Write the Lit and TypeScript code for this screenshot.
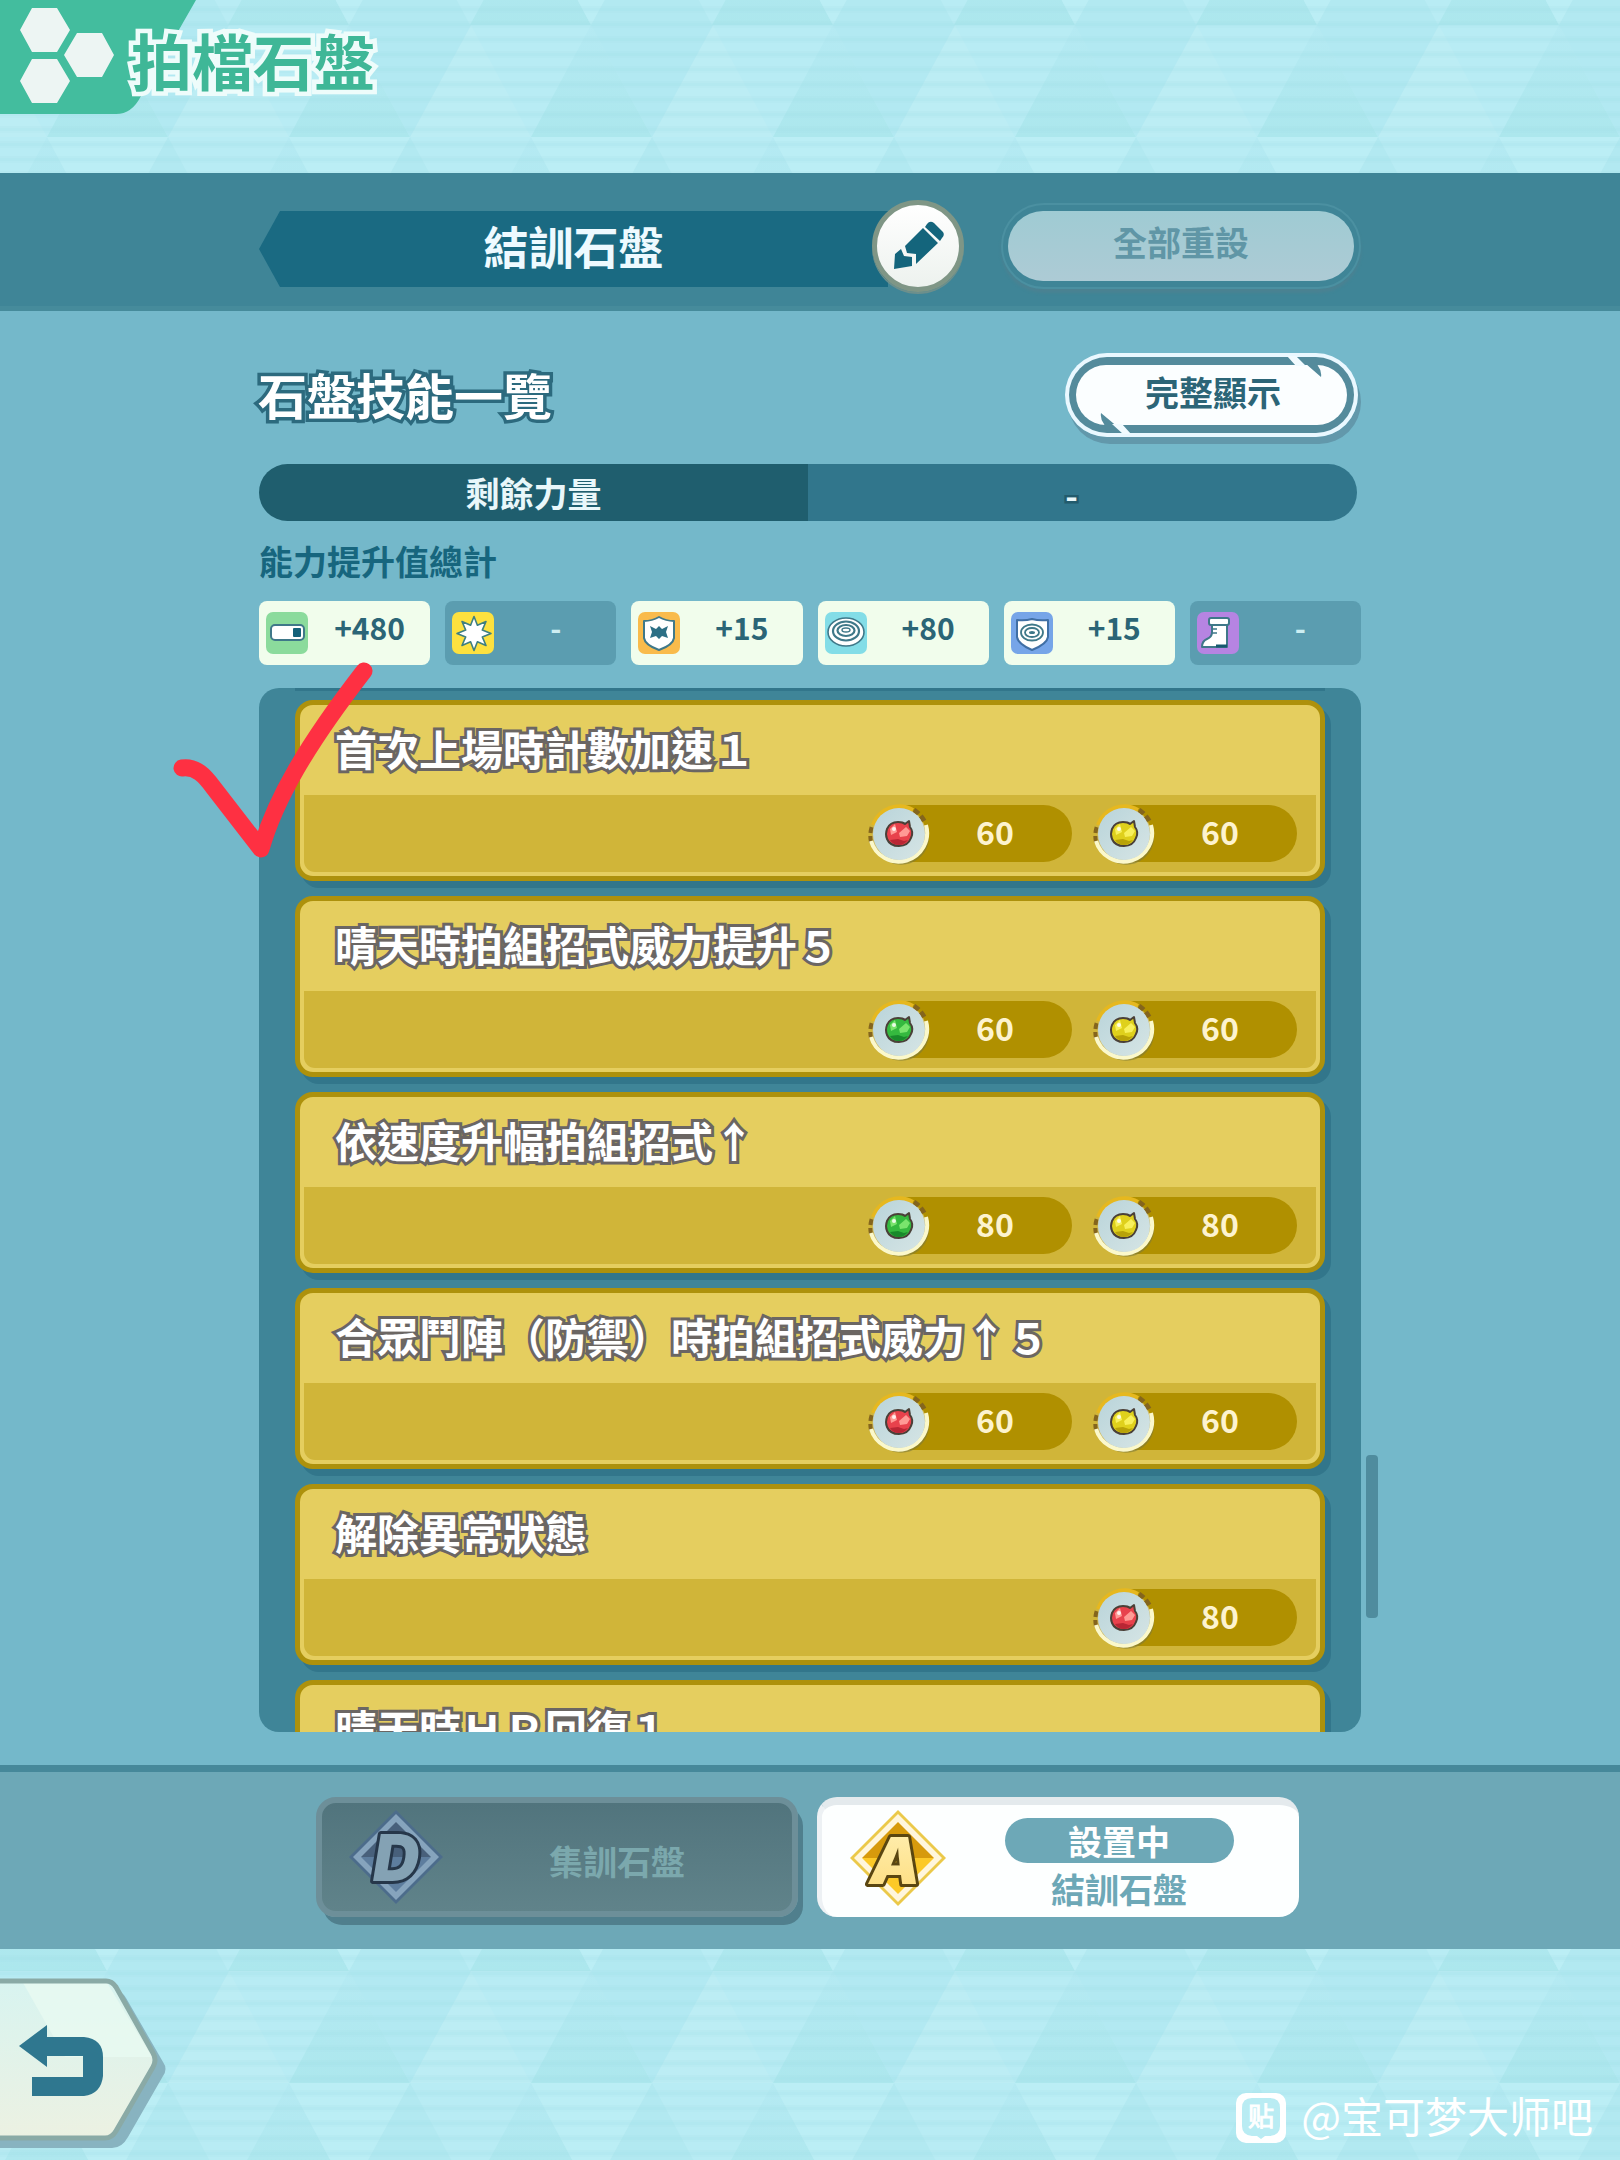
import { LitElement, html, svg, css } from "lit";
import { customElement, property } from "lit/decorators.js";

type Gem = "red" | "green" | "yellow";
type Stat = { icon: string; label: string; value: string };
type Skill = { name: string; costs: { gem: Gem; amount: number }[] };

const STATS: Stat[] = [
  { icon: "hp", label: "HP", value: "+480" },
  { icon: "attack", label: "攻擊", value: "-" },
  { icon: "defense", label: "防禦", value: "+15" },
  { icon: "spAttack", label: "特攻", value: "+80" },
  { icon: "spDefense", label: "特防", value: "+15" },
  { icon: "speed", label: "速度", value: "-" },
];

const SKILLS: Skill[] = [
  { name: "首次上場時計數加速１", costs: [{ gem: "red", amount: 60 }, { gem: "yellow", amount: 60 }] },
  { name: "晴天時拍組招式威力提升５", costs: [{ gem: "green", amount: 60 }, { gem: "yellow", amount: 60 }] },
  { name: "依速度升幅拍組招式↑", costs: [{ gem: "green", amount: 80 }, { gem: "yellow", amount: 80 }] },
  { name: "合眾鬥陣（防禦）時拍組招式威力↑５", costs: [{ gem: "red", amount: 60 }, { gem: "yellow", amount: 60 }] },
  { name: "解除異常狀態", costs: [{ gem: "red", amount: 80 }] },
  { name: "晴天時ＨＰ回復１", costs: [] },
];

const starPoints = (cx: number, cy: number, outer: number, inner: number, tips: number) =>
  Array.from({ length: tips * 2 }, (_, i) => {
    const r = i % 2 ? inner : outer;
    const a = (Math.PI * i) / tips - Math.PI / 2;
    return `${(cx + r * Math.cos(a)).toFixed(1)},${(cy + r * Math.sin(a)).toFixed(1)}`;
  }).join(" ");

const LINE = "#3f7889";

const STAT_ART: Record<string, unknown> = {
  hp: svg`
    <rect width="42" height="42" rx="7" fill="#8bdb9c"/>
    <rect x="5" y="13" width="33" height="15" rx="4" fill="#fff" stroke=${LINE} stroke-width="2"/>
    <rect x="27" y="16" width="8" height="9" rx="1" fill="#14617a"/>`,
  attack: svg`
    <rect width="42" height="42" rx="7" fill="#fde13f"/>
    <polygon points=${starPoints(22, 21.5, 17, 9, 8)} fill="#fff" stroke="#3f7f80" stroke-width="1.6" stroke-linejoin="round"/>`,
  defense: svg`
    <rect width="42" height="42" rx="7" fill="#f9bb4b"/>
    <path d="M6 9 Q14 9 21 5 Q28 9 36 9 V26 Q35 33 21 38 Q7 33 6 26Z" fill="#fff" stroke=${LINE} stroke-width="2" stroke-linejoin="round"/>
    <path d="M12 14 L18 17 L21 14 L24 17 L30 14 L28 20 L30 26 L24 24 L21 27 L18 24 L12 26 L14 20Z" fill="#2c6f85"/>`,
  spAttack: svg`
    <rect width="42" height="42" rx="7" fill="#83dde7"/>
    <ellipse cx="21" cy="20" rx="18" ry="14" fill="#fff" stroke=${LINE} stroke-width="1.6"/>
    <ellipse cx="21" cy="19" rx="13" ry="9.5" fill="#fff" stroke=${LINE} stroke-width="2.2"/>
    <ellipse cx="21" cy="18.5" rx="8.5" ry="5.5" fill="#fff" stroke=${LINE} stroke-width="2.2"/>
    <ellipse cx="21" cy="18" rx="4" ry="2" fill="#fff" stroke=${LINE} stroke-width="1.4"/>`,
  spDefense: svg`
    <rect width="42" height="42" rx="7" fill="#76a5e8"/>
    <path d="M6 8 Q14 9 21 7 Q28 9 37 8 V25 Q36 32 21 38 Q7 32 6 25Z" fill="#fff" stroke="#406fa5" stroke-width="2" stroke-linejoin="round"/>
    <ellipse cx="21" cy="20.5" rx="11" ry="8" fill="#fff" stroke=${LINE} stroke-width="1.8"/>
    <ellipse cx="21" cy="20.5" rx="7" ry="4.5" fill="#fff" stroke=${LINE} stroke-width="1.8"/>
    <ellipse cx="21" cy="20.5" rx="3" ry="1.5" fill=${LINE}/>`,
  speed: svg`
    <rect width="42" height="42" rx="7" fill="#b684e2"/>
    <path d="M15 12 V20 Q15 25 10 27 Q5 29 5 35 H30 V12Z" fill="#fff" stroke=${LINE} stroke-width="2" stroke-linejoin="round"/>
    <rect x="12" y="6" width="20" height="7" rx="2" fill="#fff" stroke=${LINE} stroke-width="2"/>
    <path d="M15 17 h5 M15 21 h5" stroke=${LINE} stroke-width="1.6"/>
    <path d="M19 34 H30" stroke="#17586f" stroke-width="3"/>`,
};

const GEMS: Record<Gem, { base: string; light: string; dark: string }> = {
  red: { base: "#e8424c", light: "#ff9a95", dark: "#b92634" },
  green: { base: "#35b93f", light: "#7ae46d", dark: "#198a2b" },
  yellow: { base: "#dfd01c", light: "#f8f05c", dark: "#b8a208" },
};

/* Pale triangle lattice with fine horizontal stripes. */
@customElement("lattice-backdrop")
export class LatticeBackdrop extends LitElement {
  @property({ type: Number }) shift = 0;

  static styles = css`
    :host { display: block; overflow: hidden; }
    .art { display: block; width: 100%; height: 100%; }
  `;

  render() {
    return html`<svg class="art" aria-hidden="true">
      <defs>
        <linearGradient id="deep" x1="0" y1="0" x2="0" y2="1">
          <stop offset="0" stop-color="#b5eaf3"/><stop offset="1" stop-color="#ace7ed"/>
        </linearGradient>
        <pattern id="tri" width="242" height="224" patternUnits="userSpaceOnUse"
          patternTransform=${`translate(47 ${this.shift})`}>
          <rect width="242" height="224" fill="#b8ecf4"/>
          <polygon points="0,112 60,0 121,112" fill="url(#deep)"/>
          <polygon points="121,112 182,0 242,112" fill="#bcedf4"/>
          <polygon points="60,0 182,0 121,112" fill="#b2e9f2"/>
          <polygon points="-61,224 0,112 60,224" fill="url(#deep)"/>
          <polygon points="181,224 242,112 302,224" fill="url(#deep)"/>
          <polygon points="60,224 121,112 181,224" fill="#b2e9f1"/>
          <polygon points="0,112 121,112 60,224" fill="#bbeef5"/>
        </pattern>
        <pattern id="lines" width="15" height="15" patternUnits="userSpaceOnUse">
          <rect y="6" width="15" height="2" fill="#9bdbe5" opacity="0.12"/>
          <rect y="8" width="15" height="3" fill="#9bdbe5" opacity="0.25"/>
          <rect y="11" width="15" height="2" fill="#9bdbe5" opacity="0.1"/>
        </pattern>
      </defs>
      <rect width="100%" height="100%" fill="url(#tri)"/>
      <rect width="100%" height="100%" fill="url(#lines)"/>
    </svg>`;
  }
}

@customElement("stat-chip")
export class StatChip extends LitElement {
  @property({ attribute: false }) stat!: Stat;

  static styles = css`
    :host { display: block; }
    .chip {
      display: flex; align-items: center; height: 64px; padding: 0 5px 0 7px;
      border-radius: 8px; background: #f1fdec; color: #2b6576;
      font: 700 30px/52px "Noto Sans CJK TC", sans-serif;
    }
    .empty { background: #5b9db0; color: #cdeef2; }
    .icon { width: 42px; height: 42px; flex: none; margin-top: 0; }
    .value { flex: 1; text-align: center; padding-left: 6px; height: 64px; }
  `;

  render() {
    const { icon, label, value } = this.stat;
    return html`<div class="chip ${value === "-" ? "empty" : ""}">
      <svg class="icon" viewBox="0 0 42 42" role="img" aria-label=${label}>${STAT_ART[icon]}</svg>
      <span class="value">${value}</span>
    </div>`;
  }
}

@customElement("skill-card")
export class SkillCard extends LitElement {
  @property({ attribute: false }) skill!: Skill;

  static styles = css`
    :host { display: block; }
    .card {
      box-sizing: border-box; height: 181px; padding: 0 4px 4px;
      display: flex; flex-direction: column;
      border: 5px solid #ad910c; border-radius: 18px;
      background: #e5ce5f; box-shadow: 6px 7px 0 #32768b;
    }
    .name {
      margin: 0; padding: 0 0 0 31px; height: 90px;
      font: 700 42px/86px "Noto Sans CJK TC", sans-serif; color: #fff;
      -webkit-text-stroke: 6px #6b6663; paint-order: stroke fill;
      white-space: nowrap;
    }
    .costs {
      flex: 1; display: flex; justify-content: flex-end; align-items: center;
      gap: 21px; padding-right: 19px; background: #d0b539;
      border-radius: 0 0 11px 11px;
    }
    .cost {
      display: flex; align-items: center; width: 204px; height: 57px;
      background: linear-gradient(90deg, transparent 30px, #b09000 30px);
      border-radius: 29px;
      font: 700 32px/52px "Noto Sans CJK TC", sans-serif; color: #fdf3cf;
    }
    .coin { width: 62px; height: 64px; flex: none; }
    .amount { flex: 1; height: 57px; padding-right: 12px; text-align: center; }
  `;

  private coin(gem: Gem) {
    const c = GEMS[gem];
    return html`<svg class="coin" viewBox="0 0 62 64" aria-hidden="true">
      <defs>
        <linearGradient id="disc" x1="0" y1="0" x2="1" y2="1">
          <stop offset="0" stop-color="#b9d4da"/><stop offset="1" stop-color="#d6e5e5"/>
        </linearGradient>
      </defs>
      <path d="M8 47 A28 28 0 0 0 61 38 L60 26 L50 20 Z" fill="#7d7a3a" opacity="0.6"/>
      <circle cx="31" cy="32" r="27" fill="#cdb75c"/>
      <path d="M5 23 A28 28 0 0 1 45 8" fill="none" stroke="#e6b81f" stroke-width="4"/>
      <path d="M3 40 A29 29 0 0 1 4 24" fill="none" stroke="#84651d" stroke-width="4" stroke-dasharray="6 3"/>
      <path d="M46 8 A29 29 0 0 1 57 21" fill="none" stroke="#84651d" stroke-width="5" stroke-dasharray="6 3"/>
      <path d="M3 39 A28 28 0 0 0 58 23" fill="none" stroke="#fbf8cb" stroke-width="4"/>
      <circle cx="31" cy="32" r="26" fill="url(#disc)"/>
      <path d="M19 27 Q22 20 30 20 Q35 20 37 22 L41 19 L42 25 Q46 30 43 36 Q40 44 31 44 Q22 44 19 37 Q17 32 19 27Z"
        fill=${c.base} stroke="#4a4038" stroke-width="2" stroke-linejoin="round"/>
      <path d="M22 27 L27 22 L29 30 L23 33Z M31 31 L38 25 L42 29 L39 34 L32 35Z" fill=${c.light}/>
      <path d="M22 38 L30 37 L36 39 L40 38 Q36 43 31 43 Q25 43 22 38Z" fill=${c.dark}/>
      <circle cx="26" cy="27" r="2" fill="#fff" opacity="0.85"/>
    </svg>`;
  }

  render() {
    return html`<article class="card">
      <h3 class="name">${this.skill.name}</h3>
      <div class="costs">
        ${this.skill.costs.map(
          (c) => html`<div class="cost">${this.coin(c.gem)}<span class="amount">${c.amount}</span></div>`
        )}
      </div>
    </article>`;
  }
}

@customElement("app-root")
export class AppRoot extends LitElement {
  static styles = css`
    :host { display: block; font-family: "Noto Sans CJK TC", sans-serif; font-weight: 700; }
    button { font: inherit; border: 0; margin: 0; padding: 0; cursor: pointer; background: none; }
    .page { display: flex; flex-direction: column; height: 100vh; min-height: 1400px; background: #74b8ca; overflow: hidden; }
    .column { width: min(1102px, calc(100% - 48px)); margin: 0 auto; }

    .header, .footer { display: grid; flex: none; }
    .header > *, .footer > * { grid-area: 1 / 1; min-width: 0; min-height: 0; }
    .header { height: 173px; }
    .footer { height: 211px; }
    .brand { display: flex; align-items: flex-start; z-index: 1; }
    .crest { width: 200px; height: 116px; flex: none; }
    .brand-name {
      margin: 20px 0 0 -69px; font-size: 61px; line-height: 80px; color: #3fb797;
      -webkit-text-stroke: 9px #eefcfb; paint-order: stroke fill; white-space: nowrap;
    }

    .toolbar { flex: none; background: #3f8597; border-bottom: 5px solid #468b9b; height: 133px; }
    .toolbar-row { display: flex; align-items: center; height: 146px; }
    .plate {
      flex: 1; height: 76px; background: #1a6a82; color: #eefaff; text-align: center;
      font-size: 45px; line-height: 70px; margin-top: 6px;
      clip-path: polygon(0 50%, 21px 0, 100% 0, 100% 100%, 21px 100%);
    }
    .edit {
      width: 92px; height: 92px; margin-left: -16px; flex: none; border-radius: 50%; z-index: 1;
      border: 5px solid #7f9686; box-sizing: border-box; background: linear-gradient(#fff, #edf2ee);
      box-shadow: 0 2px 0 #6d8f8c; display: grid; place-items: center;
    }
    .pencil { width: 56px; height: 56px; }
    .reset {
      width: 360px; height: 86px; margin-left: 37px; flex: none; box-sizing: border-box;
      border: 2px solid #4b90a1; border-radius: 43px; padding: 6px 5px;
      box-shadow: 0 4px 3px #4b8292;
    }
    .reset-face {
      display: block; height: 70px; border-radius: 35px; font-size: 34px; line-height: 62px;
      color: #6096a6; background: linear-gradient(#9fcbd3, #adcbd5);
    }

    .main { flex: 1; min-height: 0; display: flex; flex-direction: column; padding-bottom: 33px; }
    .main-column { flex: 1; min-height: 0; display: flex; flex-direction: column; }
    .title-row { display: flex; justify-content: space-between; align-items: flex-start; height: 111px; padding: 42px 0 0; }
    .title {
      margin: 4px 0 0 -1px; font-size: 49px; line-height: 74px; color: #fff; white-space: nowrap;
      -webkit-text-stroke: 7px #2c6a7e; paint-order: stroke fill;
    }
    .expand { display: grid; width: 293px; height: 84px; margin-right: 3px; border-radius: 42px; box-shadow: 3px 7px 0 #6298ab; color: #2c6577; }
    .expand > * { grid-area: 1 / 1; }
    .expand-art { width: 293px; height: 84px; }
    .expand-label { font-size: 34px; line-height: 78px; padding-left: 3px; }

    .power { display: grid; grid-template-columns: 1fr 1fr; flex: none; height: 57px; margin: 0 4px 0 0; border-radius: 29px; overflow: hidden; color: #e9f7fa; text-align: center; font-size: 34px; line-height: 58px; }
    .power-label { background: #1f5e6e; }
    .power-value { background: #31768c; padding-right: 22px; -webkit-text-stroke: 5px #225b6d; paint-order: stroke fill; line-height: 62px; }
    .subtitle { margin: 0; flex: none; height: 80px; font-size: 34px; line-height: 80px; color: #17667e; }
    .stats { list-style: none; margin: 0; padding: 0; display: grid; flex: none; grid-template-columns: repeat(6, 1fr); gap: 15px; }

    .scroller { position: relative; flex: 1; min-height: 0; margin-top: 23px; display: flex; }
    .list {
      flex: 1; list-style: none; margin: 0; padding: 0 36px; overflow: hidden; border-radius: 20px;
      background: #3f8598; display: flex; flex-direction: column; gap: 15px;
    }
    .list::before { content: ""; flex: none; height: 3px; margin-bottom: -6px; background: #32768b; }
    .item { flex: none; }
    .thumb { position: absolute; left: calc(100% + 5px); top: 73.5%; width: 12px; height: 163px; border-radius: 4px; background: #4f8c9e; }
    .tick { position: absolute; left: -89px; top: -33px; width: 210px; height: 210px; pointer-events: none; }

    .tabs { flex: none; display: flex; justify-content: center; gap: 19px; padding: 25px 5px 32px 0; border-top: 7px solid #46889a; background: #6da8b7; }
    .tab { display: grid; grid-template-columns: 152px 1fr; align-items: center; width: 482px; height: 120px; border-radius: 20px; box-sizing: border-box; font-size: 34px; }
    .tab-off { border: 6px solid #6d8f99; background: linear-gradient(#51747d, #60838a); box-shadow: 6px 9px 0 -1px #507f8d; color: #7ba8ad; padding-right: 32px; }
    .tab-on { background: #fdffff; border-top: 8px solid #e4eaed; border-left: 5px solid #edf1f4; color: #6da8b7; padding-right: 35px; }
    .emblem { width: 104px; height: 104px; justify-self: center; }
    .tab-on .emblem { margin-bottom: 6px; }
    .tab-off .emblem { margin-right: 4px; }
    .tab-text { display: flex; flex-direction: column; align-items: center; gap: 2px; line-height: 48px; padding-top: 8px; }
    .state { width: 229px; border-radius: 23px; background: #6da8b7; color: #fff; line-height: 45px; }

    .foot-row { display: flex; justify-content: space-between; align-items: flex-start; z-index: 1; padding-right: 27px; }
    .back { margin-top: 27px; height: 176px; }
    .back-art { display: block; width: 172px; height: 176px; }
    .credit { display: flex; align-items: center; gap: 15px; margin: 136px 0 0; color: #fff; font: 400 42px/60px "Noto Sans CJK SC", sans-serif; }
    .credit-text { height: 66px; }
    .credit-mark { width: 50px; height: 50px; }
    .mark-text { font: 400 26px "Noto Sans CJK SC", sans-serif; }
    .letter { font: italic 900 64px "Inter", "Liberation Sans", sans-serif; }
  `;

  private header() {
    return html`<header class="header">
      <lattice-backdrop .shift=${25}></lattice-backdrop>
      <div class="brand">
        <svg class="crest" viewBox="0 0 200 116" aria-hidden="true">
          <path d="M0 0 H196 L141 96 Q132 114 116 114 H0Z" fill="#43bd9e"/>
          <path d="M32 8 H57 L70 30 L57 52 H32 L20 30Z M77 33 H102 L114 55 L102 77 H77 L64 55Z M32 59 H57 L70 81 L57 103 H32 L20 81Z" fill="#edf5f3"/>
        </svg>
        <h1 class="brand-name">拍檔石盤</h1>
      </div>
    </header>`;
  }

  private toolbar() {
    return html`<section class="toolbar">
      <div class="column toolbar-row">
        <div class="plate">結訓石盤</div>
        <button class="edit" aria-label="編輯名稱">
          <svg class="pencil" viewBox="0 0 56 56" aria-hidden="true">
            <g fill="#14657c">
              <path d="M37 6 Q40 2 44 5 L53 14 Q55 17 52 20 L50 23 L35 9Z"/>
              <path d="M33 10 L48 25 L26 46 L26 36 L17 35 L15 28Z"/>
              <path d="M11 31 L14 38 L22 39 L22 48 L4 51 L5 36Z"/>
            </g>
          </svg>
        </button>
        <button class="reset" disabled><span class="reset-face">全部重設</span></button>
      </div>
    </section>`;
  }

  private expandButton() {
    return html`<button class="expand">
      <svg class="expand-art" viewBox="0 0 293 84" aria-hidden="true">
        <rect width="293" height="84" rx="42" fill="#eaf8ff"/>
        <rect x="4" y="4" width="285" height="76" rx="38" fill="#548b9c"/>
        <rect x="11" y="12" width="271" height="60" rx="30" fill="#fbfeff"/>
        <path d="M233 4 L256 24 Q257 18 253 13 L250 5Z M60 80 L36 60 Q35 66 39 71 L42 79Z" fill="#548b9c"/>
        <path d="M222 3 L231 13 H241 L231 3Z M66 81 L57 71 H47 L58 81Z" fill="#f2fbff"/>
      </svg>
      <span class="expand-label">完整顯示</span>
    </button>`;
  }

  private tabs() {
    return html`<nav class="tabs">
      <button class="tab tab-off">
        <svg class="emblem" viewBox="0 0 104 104" aria-hidden="true">
          <path d="M52 5 L99 52 L52 99 L5 52Z" fill="#4c6c8b"/>
          <path d="M52 9 L95 52 L52 95 L9 52Z" fill="#86a4bd"/>
          <path d="M52 17 L87 52 H17Z" fill="#48607b"/>
          <path d="M17 52 H87 L52 87Z" fill="#5d7d9e"/>
          <text class="letter" x="52" y="76" text-anchor="middle" fill="#84a2b4" stroke="#26374a" stroke-width="6" paint-order="stroke" stroke-linejoin="round">D</text>
        </svg>
        <span class="tab-text"><span>集訓石盤</span></span>
      </button>
      <button class="tab tab-on" aria-current="true">
        <svg class="emblem" viewBox="0 0 104 104" aria-hidden="true">
          <defs>
            <linearGradient id="gold" x1="0" y1="0" x2="0" y2="1">
              <stop offset="0" stop-color="#fff0b4"/><stop offset="1" stop-color="#fddc7c"/>
            </linearGradient>
          </defs>
          <path d="M52 4 L100 52 L52 100 L4 52Z" fill="#ebc94a"/>
          <path d="M52 8 L96 52 L52 96 L8 52Z" fill="#fff6dc"/>
          <path d="M52 16 L88 52 H16Z" fill="#d79a0c"/>
          <path d="M16 52 H88 L52 88Z" fill="#fcc928"/>
          <text class="letter" x="49" y="78" text-anchor="middle" fill="url(#gold)" stroke="#5a4611" stroke-width="6" paint-order="stroke" stroke-linejoin="round">A</text>
        </svg>
        <span class="tab-text"><span class="state">設置中</span><span>結訓石盤</span></span>
      </button>
    </nav>`;
  }

  private footer() {
    return html`<footer class="footer">
      <lattice-backdrop .shift=${22}></lattice-backdrop>
      <div class="foot-row">
        <button class="back" aria-label="返回">
          <svg class="back-art" viewBox="0 0 172 176" aria-hidden="true">
            <defs>
              <linearGradient id="face" x1="0" y1="0" x2="0" y2="1">
                <stop offset="0" stop-color="#d8f4f0"/><stop offset="1" stop-color="#ecf1e2"/>
              </linearGradient>
            </defs>
            <path d="M0 14 H114 Q121 14 126 22 L163 86 Q168 93 163 100 L128 161 Q122 172 112 172 H0Z" fill="#88b3c0"/>
            <path d="M0 5 H106 Q112 5 116 11 L153 77 Q157 84 153 91 L116 155 Q112 162 105 162 H0Z" fill="url(#face)"/>
            <path d="M22 5 H106 L152 81 H65Z" fill="#e9faf1" opacity="0.8"/>
            <path d="M0 5 H106 Q112 5 116 11 L153 77 Q157 84 153 91 L116 155 Q112 162 105 162 H0" fill="none" stroke="#8aaaa6" stroke-width="5"/>
            <path d="M19 70 L47 49 V61 H84 Q103 63 103 81 V100 Q101 118 84 120 H32 V101 H83 V80 H47 V91Z" fill="#2f778f"/>
          </svg>
        </button>
        <p class="credit">
          <svg class="credit-mark" viewBox="0 0 50 50" aria-hidden="true">
            <rect width="50" height="50" rx="10" fill="#fff"/>
            <path d="M16 5 H34 Q44 5 44 15 V33 Q44 42 34 43 H29 L25 46 L21 43 H16 Q6 42 6 33 V15 Q6 5 16 5Z" fill="#b9ecf3"/>
            <text class="mark-text" x="25" y="33" text-anchor="middle" fill="#fff" stroke="#fff" stroke-width="1">贴</text>
          </svg>
          <span class="credit-text">@宝可梦大师吧</span>
        </p>
      </div>
    </footer>`;
  }

  render() {
    return html`<div class="page">
      ${this.header()} ${this.toolbar()}
      <main class="main">
        <div class="column main-column">
          <div class="title-row">
            <h2 class="title">石盤技能一覽</h2>
            ${this.expandButton()}
          </div>
          <div class="power">
            <span class="power-label">剩餘力量</span><span class="power-value">-</span>
          </div>
          <p class="subtitle">能力提升值總計</p>
          <ul class="stats">
            ${STATS.map((s) => html`<li><stat-chip .stat=${s}></stat-chip></li>`)}
          </ul>
          <div class="scroller">
            <ul class="list">
              ${SKILLS.map((s) => html`<li class="item"><skill-card .skill=${s}></skill-card></li>`)}
            </ul>
            <div class="thumb"></div>
            <svg class="tick" viewBox="170 655 210 210" aria-hidden="true">
              <path d="M182 768 C196 766 205 776 213 787 L261 849 C275 800 306 746 364 671"
                fill="none" stroke="#fe3042" stroke-width="17" stroke-linecap="round" stroke-linejoin="round"/>
            </svg>
          </div>
        </div>
      </main>
      ${this.tabs()} ${this.footer()}
    </div>`;
  }
}
